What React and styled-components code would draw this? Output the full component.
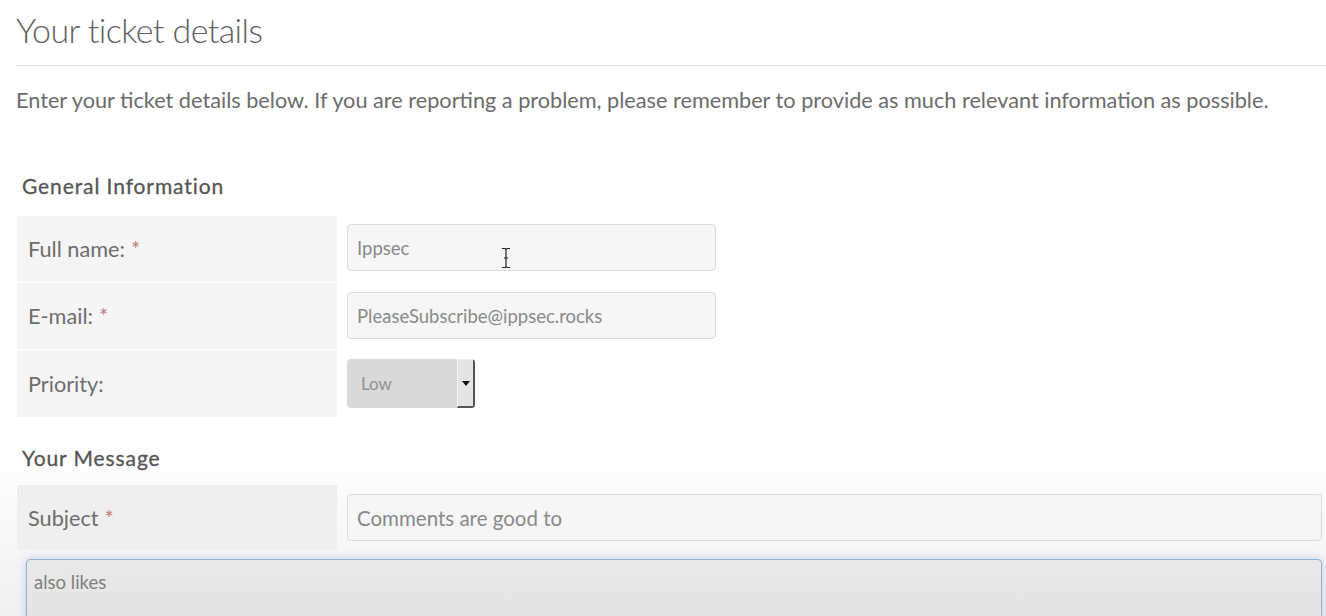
import React from "react";
import styled, { createGlobalStyle } from "styled-components";

const Global = createGlobalStyle`
  html, body { margin: 0; padding: 0; }
  body {
    width: 1326px;
    height: 616px;
    overflow: hidden;
    font-family: Lato, "Noto Sans", sans-serif;
    background: linear-gradient(to bottom, #ffffff 0px, #ffffff 440px, #f1f1f1 616px);
  }
`;

const Page = styled.div`
  position: relative;
  padding: 0 0 0 16px;
  color: #666;
`;

const Title = styled.h1`
  margin: 0;
  padding-top: 10px;
  font-size: 34px;
  font-weight: 300;
  letter-spacing: -0.6px;
  line-height: 40px;
  color: #5f5f5f;
`;

const Rule = styled.hr`
  margin: 15px 0 0 0;
  border: 0;
  border-top: 1px solid #dedede;
`;

const Intro = styled.p`
  margin: 20px 0 0 0;
  font-size: 21.7px;
  line-height: 28px;
  color: #6c6c6c;
`;

const Section = styled.h3`
  margin: ${(p) => p.$top}px 0 0 6px;
  font-size: 21px;
  line-height: 28px;
  font-weight: 400;
  letter-spacing: 0.9px;
  color: #555;
  -webkit-text-stroke: 0.3px #555;
`;

const Rows = styled.div`
  margin-top: ${(p) => p.$top}px;
  display: flex;
  flex-direction: column;
  gap: 1px;
`;

const Row = styled.div`
  display: grid;
  grid-template-columns: 320px 1fr;
  column-gap: 10px;
  align-items: start;
  padding-left: 1px;
`;

const Label = styled.div`
  height: ${(p) => p.$h}px;
  background: ${(p) => p.$bg || "#f5f5f5"};
  display: flex;
  align-items: center;
  padding-left: 11px;
  font-size: 21.7px;
  color: #6e6e6e;
  box-sizing: border-box;
`;

const Star = styled.span`
  color: #c47a72;
  margin-left: 6px;
`;

const Input = styled.div`
  box-sizing: border-box;
  width: ${(p) => p.$w};
  height: 47px;
  margin-top: ${(p) => p.$mt || 9}px;
  border: 1px solid #dcdcdc;
  border-radius: 4px;
  background: #f6f6f6;
  display: flex;
  align-items: center;
  padding-left: 9px;
  font-size: ${(p) => p.$fs || 18.5}px;
  color: #8a8a8a;
`;

const Select = styled.div`
  box-sizing: border-box;
  width: 128px;
  height: 49px;
  margin-top: 9px;
  border-radius: 4px;
  background: #d9d9d9;
  display: flex;
  align-items: stretch;
  font-size: 17px;
  color: #929292;
  overflow: hidden;
`;

const SelectText = styled.div`
  flex: 1;
  display: flex;
  align-items: center;
  padding-left: 14px;
`;

const SelectButton = styled.div`
  width: 15px;
  background: #e4e4e4;
  border-left: 1px solid #f4f4f4;
  border-right: 2px solid #555;
  border-bottom: 2px solid #555;
  border-top: 1px solid #f0f0f0;
  display: flex;
  align-items: center;
  justify-content: center;
`;

const Arrow = styled.div`
  width: 0;
  height: 0;
  border-left: 4px solid transparent;
  border-right: 4px solid transparent;
  border-top: 5px solid #111;
`;

const TextArea = styled.div`
  box-sizing: border-box;
  margin: 9px 4px 0 10px;
  height: 80px;
  border: 1px solid #8fb2d6;
  border-radius: 4px;
  background: linear-gradient(to bottom, #e9e9e9, #e3e3e3);
  box-shadow: 0 0 8px rgba(120, 160, 210, 0.45);
  padding: 11px 0 0 7px;
  font-size: 18.5px;
  color: #808080;
`;

const Cursor = styled.svg`
  position: absolute;
  left: 500px;
  top: 247px;
`;

export default function App() {
  return (
    <>
      <Global />
      <Page>
        <Title>Your ticket details</Title>
        <Rule />
        <Intro>
          Enter your ticket details below. If you are reporting a problem, please remember to provide as much relevant information as possible.
        </Intro>
        <Section $top={58}>General Information</Section>
        <Rows $top={16}>
          <Row>
            <Label $h={66}>Full name:<Star>*</Star></Label>
            <Input $w="369px" $mt={8}>Ippsec</Input>
          </Row>
          <Row>
            <Label $h={66}>E-mail:<Star>*</Star></Label>
            <Input $w="369px">PleaseSubscribe@ippsec.rocks</Input>
          </Row>
          <Row>
            <Label $h={67}>Priority:</Label>
            <Select>
              <SelectText>Low</SelectText>
              <SelectButton><Arrow /></SelectButton>
            </Select>
          </Row>
        </Rows>
        <Section $top={27}>Your Message</Section>
        <Rows $top={13}>
          <Row>
            <Label $h={65} $bg="#efefef">Subject<Star>*</Star></Label>
            <Input $w="calc(100% - 4px)" $fs={20.5}>Comments are good to</Input>
          </Row>
        </Rows>
        <TextArea>also likes</TextArea>
        <Cursor width="12" height="22" viewBox="0 0 12 22">
          <path d="M2 1.5h3l1 1 1-1h3M6 2.5v17M2 20.5h3l1-1 1 1h3M4 11h4" stroke="#222" strokeWidth="1.2" fill="none" />
        </Cursor>
      </Page>
    </>
  );
}
